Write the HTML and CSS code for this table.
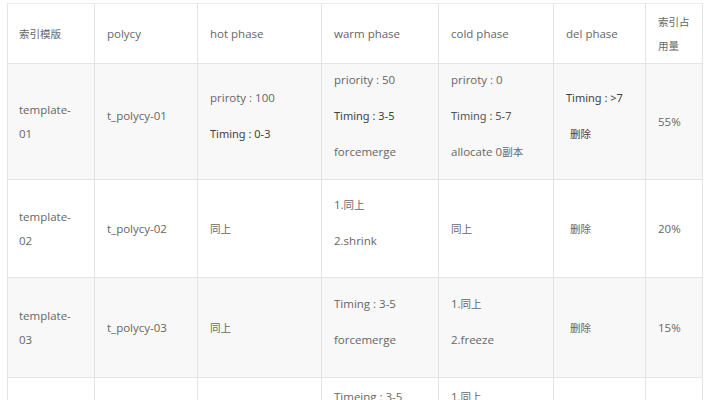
FILE: index.html
```html
<!DOCTYPE html>
<html lang="zh">
<head>
<meta charset="utf-8">
<link rel="stylesheet" href="styles.css">
</head>
<body>
<table class="policy">
  <colgroup>
    <col class="c1"><col class="c2"><col class="c3"><col class="c4"><col class="c5"><col class="c6"><col class="c7">
  </colgroup>
  <tr class="head">
    <td><span class="zh">索引模版</span></td>
    <td>polycy</td>
    <td>hot phase</td>
    <td>warm phase</td>
    <td>cold phase</td>
    <td>del phase</td>
    <td class="last"><span class="zh">索引占用量</span></td>
  </tr>
  <tr class="r1 alt">
    <td>template-01</td>
    <td><p>t_polycy-01</p></td>
    <td><p>priroty : 100</p><p class="dark">Timing : 0-3</p></td>
    <td><p>priority : 50</p><p class="dark">Timing : 3-5</p><p>forcemerge</p></td>
    <td><p>priroty : 0</p><p class="mid">Timing : 5-7</p><p>allocate 0<span class="zh">副本</span></p></td>
    <td><p class="dark">Timing : &gt;7</p><p class="dark ind"><span class="zh">删除</span></p></td>
    <td>55%</td>
  </tr>
  <tr class="r2">
    <td>template-02</td>
    <td>t_polycy-02</td>
    <td><span class="zh">同上</span></td>
    <td><p>1.<span class="zh">同上</span></p><p>2.shrink</p></td>
    <td><span class="zh">同上</span></td>
    <td class="ind"><span class="zh">删除</span></td>
    <td>20%</td>
  </tr>
  <tr class="r3 alt">
    <td>template-03</td>
    <td>t_polycy-03</td>
    <td><span class="zh">同上</span></td>
    <td><p>Timing : 3-5</p><p>forcemerge</p></td>
    <td><p>1.<span class="zh">同上</span></p><p>2.freeze</p></td>
    <td class="ind"><span class="zh">删除</span></td>
    <td>15%</td>
  </tr>
  <tr class="r4">
    <td>template-04</td>
    <td>t_polycy-04</td>
    <td><span class="zh">同上</span></td>
    <td class="top"><p>Timeing : 3-5</p><p>forcemerge</p><p>shrink</p></td>
    <td class="top"><p>1.<span class="zh">同上</span></p><p>2.freeze</p><p>3.close</p></td>
    <td class="ind"><span class="zh">删除</span></td>
    <td>10%</td>
  </tr>
</table>
</body>
</html>
```

FILE: styles.css
```css
html, body {
  margin: 0;
  padding: 0;
  background: #ffffff;
}

body {
  padding: 3px 0 0 7px;
  font-family: "Open Sans", "Noto Sans CJK SC", sans-serif;
  font-size: 11.5px;
  color: #666666;
}

.policy {
  border-collapse: collapse;
  table-layout: fixed;
  width: 695px;
}

.c1 { width: 87px; }
.c2 { width: 103px; }
.c3 { width: 124px; }
.c4 { width: 117px; }
.c5 { width: 115px; }
.c6 { width: 92px; }
.c7 { width: 57px; }

.policy td {
  border: 1px solid #e4e4e4;
  padding: 0 12px;
  line-height: 24px;
  vertical-align: middle;
}

.policy td:first-child {
  padding-left: 11px;
}

.policy td.last {
  padding-right: 8px;
}

.policy tr:first-child td {
  border-top: 1px solid #ececec;
}

.head { height: 60px; }
.r1 { height: 116px; }
.r2 { height: 98px; }
.r3 { height: 100px; }
.r4 { height: 118px; }

.alt td {
  background: #f8f8f8;
}

.policy p {
  margin: 0 0 12px 0;
}

.policy td.top {
  padding-top: 5px;
}

.zh {
  font-family: "Noto Sans CJK SC", sans-serif;
  font-size: 10.5px;
}

.dark {
  color: #3f3f3f;
  font-family: "Noto Sans", "Noto Sans CJK SC", sans-serif;
  font-size: 11px;
}

.mid {
  color: #555555;
  font-family: "Noto Sans", "Noto Sans CJK SC", sans-serif;
  font-size: 11px;
}

.ind {
  text-indent: 4px;
}
```
